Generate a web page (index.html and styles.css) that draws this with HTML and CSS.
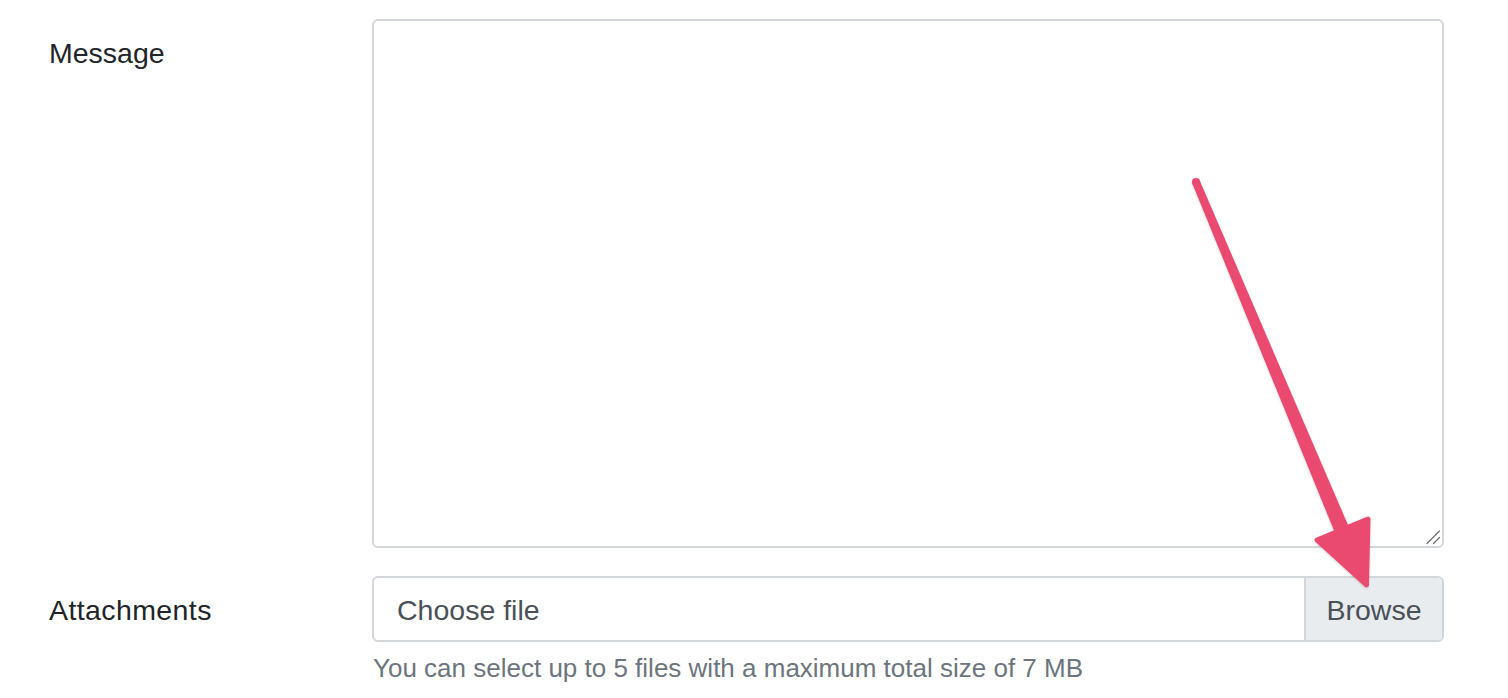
FILE: index.html
```html
<!DOCTYPE html>
<html lang="en">
<head>
<meta charset="utf-8">
<title>Form</title>
<link rel="stylesheet" href="styles.css">
</head>
<body>
<form class="form">
  <div class="row row-message">
    <label class="label label-top" for="msg">Message</label>
    <div class="textarea-wrap">
      <textarea id="msg" class="textarea"></textarea>
      <svg class="grip" width="16" height="16" viewBox="0 0 16 16" aria-hidden="true">
        <path d="M2 14.5 L14.5 2 M8.5 14.5 L14.5 8.5" stroke="#6f6f6f" stroke-width="1.3" stroke-linecap="round" fill="none"/>
      </svg>
    </div>
  </div>
  <div class="row row-attach">
    <label class="label" for="file">Attachments</label>
    <div class="control">
      <div class="file-input">
        <span class="file-text">Choose file</span>
        <span class="file-btn">Browse</span>
      </div>
      <div class="help">You can select up to 5 files with a maximum total size of 7 MB</div>
    </div>
  </div>
</form>
<svg class="arrow" width="1508" height="698" viewBox="0 0 1508 698" aria-hidden="true">
  <defs>
    <filter id="sh" x="-20%" y="-20%" width="140%" height="140%">
      <feDropShadow dx="0" dy="1" stdDeviation="1.2" flood-color="#000" flood-opacity="0.18"/>
    </filter>
  </defs>
  <g fill="#ea4a6f" filter="url(#sh)">
    <circle cx="1196" cy="182" r="4"/>
    <polygon points="1199.7,180.45 1349,527.3 1335,533 1192.3,183.55"/>
    <polygon points="1317,540 1368,519 1366.5,585" stroke="#ea4a6f" stroke-width="5" stroke-linejoin="round"/>
  </g>
</svg>
</body>
</html>
```
FILE: styles.css
```css
html, body {
  margin: 0;
  padding: 0;
  background: #ffffff;
}
body {
  font-family: "Liberation Sans", Arial, sans-serif;
  color: #212529;
  width: 1508px;
  height: 698px;
  overflow: hidden;
  position: relative;
}
.form {
  padding: 19px 64px 0 49px;
  display: flex;
  flex-direction: column;
  gap: 28px;
}
.row {
  display: grid;
  grid-template-columns: 323px 1fr;
}
.row-attach {
  align-items: start;
}
.label {
  font-size: 28.5px;
  line-height: 42px;
  color: #212529;
}
.label-top {
  padding-top: 13px;
}
.row-attach .label {
  padding-top: 13px;
  letter-spacing: 0.4px;
}
.textarea-wrap {
  position: relative;
  height: 529px;
}
.textarea {
  display: block;
  box-sizing: border-box;
  width: 100%;
  height: 529px;
  margin: 0;
  border: 2px solid #d3d6da;
  border-radius: 6px;
  background: #fff;
  font-family: "Liberation Sans", Arial, sans-serif;
  font-size: 28.5px;
  resize: none;
  outline: none;
}
.grip {
  position: absolute;
  right: 3px;
  bottom: 3px;
}
.control {
  display: flex;
  flex-direction: column;
}
.file-input {
  box-sizing: border-box;
  height: 66px;
  display: flex;
  border: 2px solid #d3d6da;
  border-radius: 6px;
  overflow: hidden;
  font-size: 28.5px;
  color: #495057;
}
.file-text {
  flex: 1;
  display: flex;
  align-items: center;
  padding-left: 23px;
  padding-top: 2px;
}
.file-btn {
  width: 138px;
  box-sizing: border-box;
  display: flex;
  align-items: center;
  justify-content: center;
  background: #e9ecef;
  border-left: 2px solid #d3d6da;
  padding-top: 2px;
}
.help {
  margin-top: 11px;
  font-size: 26px;
  line-height: 30px;
  color: #6c757d;
  padding-left: 1px;
}
.arrow {
  position: absolute;
  left: 0;
  top: 0;
  pointer-events: none;
}
```
